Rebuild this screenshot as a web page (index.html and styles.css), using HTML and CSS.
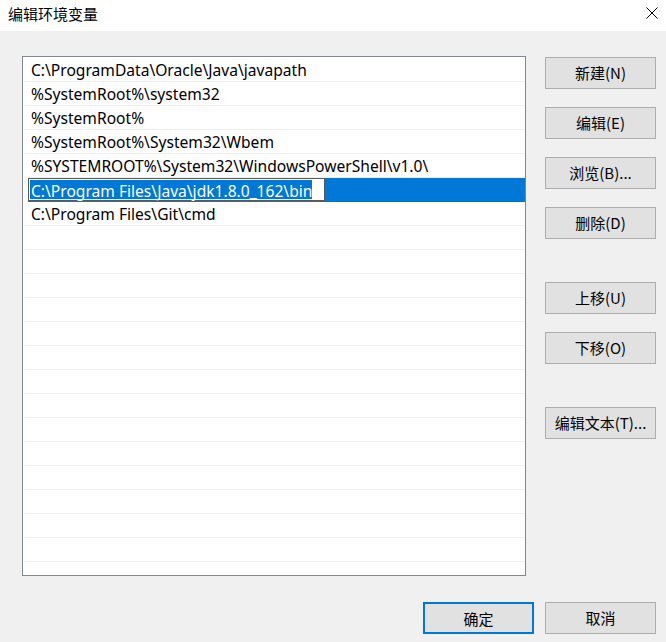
FILE: index.html
```html
<!DOCTYPE html>
<html lang="zh-CN">
<head>
<meta charset="utf-8">
<title>编辑环境变量</title>
<link rel="stylesheet" href="styles.css">
</head>
<body>
<div class="dialog">
  <div class="titlebar">
    <span class="title">编辑环境变量</span>
    <svg class="close" width="12" height="12" viewBox="0 0 12 12"><path d="M0.5 0.5 L11.5 11.5 M11.5 0.5 L0.5 11.5" stroke="#000" stroke-width="1" fill="none"/></svg>
  </div>
  <div class="body">
    <div class="main">
      <div class="list">
        <div class="row"><span class="cell">C:\ProgramData\Oracle\Java\javapath</span></div>
        <div class="row"><span class="cell">%SystemRoot%\system32</span></div>
        <div class="row"><span class="cell">%SystemRoot%</span></div>
        <div class="row"><span class="cell">%SystemRoot%\System32\Wbem</span></div>
        <div class="row"><span class="cell">%SYSTEMROOT%\System32\WindowsPowerShell\v1.0\</span></div>
        <div class="row selected"><span class="editbox"><span class="sel">C:\Program Files\Java\jdk1.8.0_162\bin</span></span></div>
        <div class="row"><span class="cell">C:\Program Files\Git\cmd</span></div>
        <div class="row"></div>
        <div class="row"></div>
        <div class="row"></div>
        <div class="row"></div>
        <div class="row"></div>
        <div class="row"></div>
        <div class="row"></div>
        <div class="row"></div>
        <div class="row"></div>
        <div class="row"></div>
        <div class="row"></div>
        <div class="row"></div>
        <div class="row"></div>
        <div class="row"></div>
        <div class="row"></div>
      </div>
      <div class="side">
        <div class="group">
          <button class="btn">新建(N)</button>
          <button class="btn">编辑(E)</button>
          <button class="btn">浏览(B)...</button>
          <button class="btn">删除(D)</button>
        </div>
        <div class="group">
          <button class="btn">上移(U)</button>
          <button class="btn">下移(O)</button>
        </div>
        <div class="group">
          <button class="btn">编辑文本(T)...</button>
        </div>
      </div>
    </div>
    <div class="footer">
      <button class="btn primary">确定</button>
      <button class="btn">取消</button>
    </div>
  </div>
</div>
</body>
</html>
```

FILE: styles.css
```css
html, body {
  margin: 0;
  padding: 0;
}
body {
  width: 666px;
  height: 642px;
  overflow: hidden;
  background: #f0f0f0;
  font-family: "Noto Sans", "Noto Sans CJK SC", sans-serif;
  color: #000;
}
.dialog {
  display: flex;
  flex-direction: column;
  height: 642px;
}
.titlebar {
  height: 31px;
  background: #fff;
  display: flex;
  align-items: center;
  justify-content: space-between;
  padding: 0 8px 0 8px;
}
.title {
  font-family: "Noto Sans CJK SC", sans-serif;
  font-size: 15px;
  line-height: 15px;
  margin-top: -4px;
}
.close {
  margin-top: -6px;
  margin-right: 0;
}
.body {
  padding: 25px 10px 0 22px;
  display: flex;
  flex-direction: column;
}
.main {
  display: flex;
  gap: 19px;
}
.list {
  box-sizing: border-box;
  width: 504px;
  height: 520px;
  border: 1px solid #828790;
  background: #fff;
  padding-top: 1px;
  overflow: hidden;
}
.row {
  box-sizing: border-box;
  height: 24px;
  margin-left: 1px;
  border-bottom: 1px solid #f0f0f0;
  display: flex;
  align-items: center;
  font-size: 15.6px;
  white-space: nowrap;
}
.cell {
  padding-left: 7px;
  line-height: 23px;
  margin-top: 1px;
}
.row.selected {
  background: #0078d7;
  border-bottom-color: #0078d7;
  margin-left: 5px;
  align-items: stretch;
}
.editbox {
  box-sizing: border-box;
  width: 297px;
  border: 1px solid #5a5a5a;
  background: #fff;
  padding: 1px 1px;
  display: flex;
  align-items: stretch;
}
.sel {
  background: #0078d7;
  color: #fff;
  padding-left: 1px;
  line-height: 20px;
  padding-top: 1px;
}
.side {
  display: flex;
  flex-direction: column;
  padding-top: 1px;
  gap: 43px;
}
.group {
  display: flex;
  flex-direction: column;
  gap: 18px;
}
.btn {
  box-sizing: border-box;
  width: 111px;
  height: 32px;
  border: 1px solid #adadad;
  background: #e1e1e1;
  font-family: "Noto Sans CJK SC", sans-serif;
  font-size: 15px;
  color: #000;
  padding: 0;
  margin: 0;
  line-height: 30px;
  text-align: center;
}
.footer {
  display: flex;
  justify-content: flex-end;
  gap: 11px;
  margin-top: 26px;
}
.btn.primary {
  border: 2px solid #0078d7;
}
```
